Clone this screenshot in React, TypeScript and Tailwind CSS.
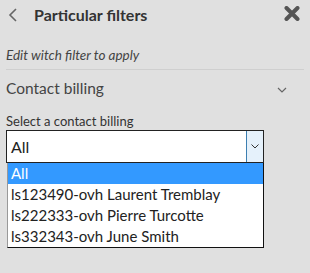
import { useState } from "react";

const contacts = [
  { value: "all", label: "All" },
  { value: "ls123490-ovh", label: "ls123490-ovh Laurent Tremblay" },
  { value: "ls222333-ovh", label: "ls222333-ovh Pierre Turcotte" },
  { value: "ls332343-ovh", label: "ls332343-ovh June Smith" },
];

export default function App() {
  const [selected] = useState("all");

  return (
    <div
      className="w-[310px] h-[273px] bg-[#e0e0e0] text-[#333] overflow-hidden"
      style={{ fontFamily: "Lato, 'Noto Sans', sans-serif" }}
    >
      <header className="flex items-center h-[29px] pl-[8px] pr-[10px]">
        <svg width="10" height="14" viewBox="0 0 10 14" className="mt-[1px]">
          <path d="M8 1 L2 7 L8 13" fill="none" stroke="#666" strokeWidth="1.6" />
        </svg>
        <h1 className="ml-[16px] text-[16px] font-bold text-[#333] leading-none">
          Particular filters
        </h1>
        <svg width="16" height="15" viewBox="0 0 16 15" className="ml-auto mt-[-2px]">
          <path d="M2.5 2 L13.5 13 M13.5 2 L2.5 13" stroke="#555" strokeWidth="4" strokeLinecap="round" />
        </svg>
      </header>

      <div className="mx-[6px]">
        <p className="mt-[18px] text-[13.5px] italic text-[#444] leading-[16px]">
          Edit witch filter to apply
        </p>
        <div className="mt-[6px] border-t border-[#cfcfcf]" />

        <div className="flex items-center justify-between mt-[9px] h-[20px]">
          <span className="text-[15.5px] text-[#444]">Contact billing</span>
          <svg width="10" height="6" viewBox="0 0 10 6" className="mr-[17px] mt-[2px]">
            <path d="M1 1 L5 5 L9 1" fill="none" stroke="#666" strokeWidth="1.2" />
          </svg>
        </div>

        <label className="block mt-[14px] text-[13px] text-[#333] leading-[16px]">
          Select a contact billing
        </label>

        <div className="w-[258px] mt-[1px]">
          <div className="flex h-[33px] border border-[#222] bg-white">
            <span className="flex-1 flex items-center pl-[4px] text-[16px] text-[#222]">All</span>
            <div className="w-[17px] flex items-center justify-center bg-[#e5f1fb] border-l border-[#3c7fb1]">
              <svg width="8" height="5" viewBox="0 0 8 5">
                <path d="M0.5 0.5 L4 4 L7.5 0.5" fill="none" stroke="#333" strokeWidth="1" />
              </svg>
            </div>
          </div>
          <ul className="ml-[1px] border border-[#111] border-l-[#999] border-t-0 bg-white">
            {contacts.map((c) => (
              <li
                key={c.value}
                className={
                  c.value === selected
                    ? "h-[21px] flex items-center pl-[3px] text-[15px] bg-[#3399ff] text-white"
                    : "h-[21px] flex items-center pl-[3px] text-[15px] text-[#222]"
                }
              >
                {c.label}
              </li>
            ))}
          </ul>
        </div>
      </div>
    </div>
  );
}
